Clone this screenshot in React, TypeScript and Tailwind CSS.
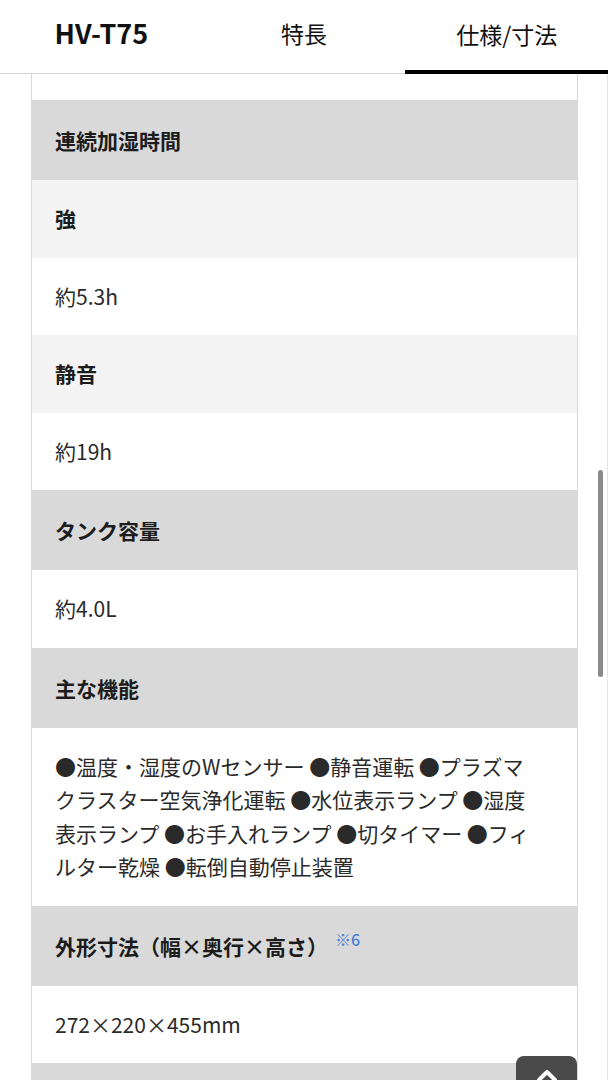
import React from "react"

type Row = {
  kind: "head" | "sub" | "value"
  text: string
  note?: string
}

const rows: Row[] = [
  { kind: "head", text: "連続加湿時間" },
  { kind: "sub", text: "強" },
  { kind: "value", text: "約5.3h" },
  { kind: "sub", text: "静音" },
  { kind: "value", text: "約19h" },
  { kind: "head", text: "タンク容量" },
  { kind: "value", text: "約4.0L" },
  { kind: "head", text: "主な機能" },
  {
    kind: "value",
    text: "●温度・湿度のWセンサー ●静音運転 ●プラズマクラスター空気浄化運転 ●水位表示ランプ ●湿度表示ランプ ●お手入れランプ ●切タイマー ●フィルター乾燥 ●転倒自動停止装置",
  },
  { kind: "head", text: "外形寸法（幅×奥行×高さ）", note: "※6" },
  { kind: "value", text: "272×220×455mm" },
  { kind: "head", text: "\u00a0" },
]

const rowClass = {
  head: "bg-[#d9d9d9] font-bold py-[23px] leading-[34px] text-[#1c1c1c]",
  sub: "bg-[#f4f4f4] font-bold py-[22px] leading-[33.5px] text-[#1c1c1c]",
  value: "bg-white font-normal py-[22px] leading-[33.5px] text-[#2a2a2a]",
}

const SpecRow = ({ row }: { row: Row }) => (
  <div className={`${rowClass[row.kind]} pl-[23px] pr-[34px] text-[21px]`}>
    {row.text}
    {row.note && (
      <sup className="ml-[7px] text-[16px] font-medium text-[#4a7fd4] relative -top-[9px]">{row.note}</sup>
    )}
  </div>
)

export default function App() {
  return (
    <div
      className="relative h-screen overflow-hidden bg-white"
      style={{ fontFamily: '"Noto Sans CJK JP", "Noto Sans", sans-serif' }}
    >
      {/* Header tabs */}
      <div className="grid grid-cols-3 h-[74px] border-b border-[#d6d6d6] text-[#111]">
        <div className="flex items-center justify-center pb-[6px] text-[27px] font-bold">HV-T75</div>
        <div className="flex items-center justify-center pb-[6px] text-[23px]">特長</div>
        <div className="flex items-center justify-center pb-[2px] text-[23px] border-b-4 border-black -mb-px">仕様/寸法</div>
      </div>

      {/* Spec card */}
      <div className="flex">
        <div className="w-[31px]" />
        <div className="w-[547px] border-x border-[#d9d9d9] flex flex-col">
          <div className="h-[26px] bg-white" />
          {rows.map((row, i) => (
            <SpecRow key={i} row={row} />
          ))}
        </div>
        <div className="flex-1 border-r border-[#e4e4e4]" />
      </div>

      {/* Overlay scrollbar */}
      <div className="absolute left-[598px] top-[470px] w-[5px] h-[207px] rounded-full bg-[#8a8a8a]" />

      {/* Back to top */}
      <button className="absolute left-[516px] top-[1056px] w-[61px] h-[40px] rounded-lg bg-[#4a4a4a] flex justify-center pt-[12px]">
        <svg width="22" height="14" viewBox="0 0 22 14" fill="none">
          <path d="M3 12 L11 4 L19 12" stroke="white" strokeWidth="4" strokeLinecap="round" strokeLinejoin="round" />
        </svg>
      </button>
    </div>
  )
}
